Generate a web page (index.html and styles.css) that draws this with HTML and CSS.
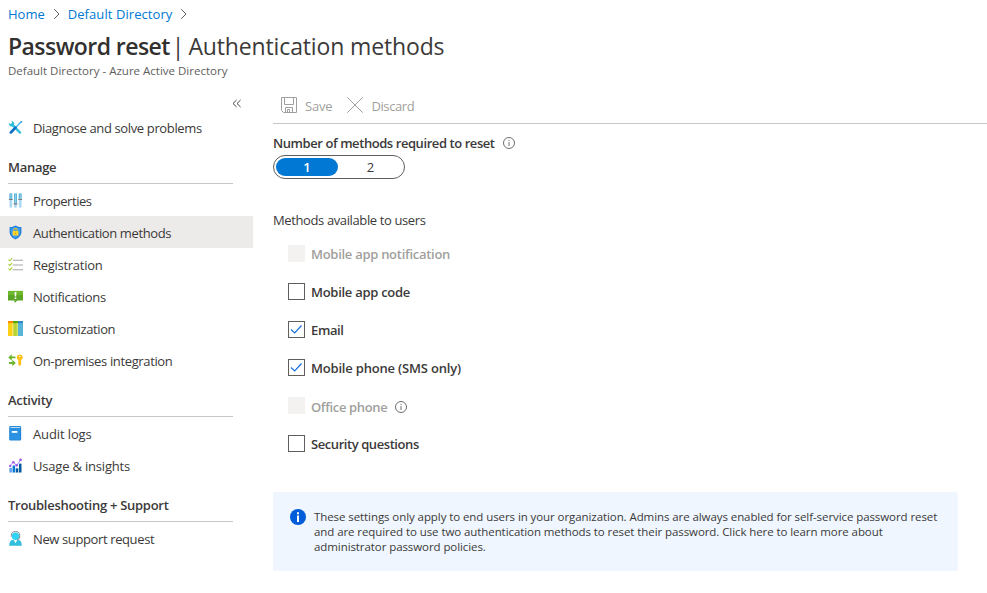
FILE: index.html
```html
<!DOCTYPE html>
<html lang="en">
<head>
<meta charset="utf-8">
<title>Password reset - Authentication methods</title>
<link rel="stylesheet" href="styles.css">
</head>
<body>
<header class="header">
  <nav class="crumbs">
    <a class="crumb">Home</a>
    <svg class="chev" viewBox="0 0 8 12"><path d="M1.2 1.2 6 6 1.2 10.8"/></svg>
    <a class="crumb wide">Default Directory</a>
    <svg class="chev" viewBox="0 0 8 12"><path d="M1.2 1.2 6 6 1.2 10.8"/></svg>
  </nav>
  <h1 class="title"><span class="title-main">Password reset</span><span class="title-bar">|</span><span class="title-sub">Authentication methods</span></h1>
  <p class="subtitle">Default Directory - Azure Active Directory</p>
</header>
<div class="body">
  <aside class="side">
    <div class="collapse"><svg viewBox="0 0 10 8"><path d="M4.6.5 1 4l3.6 3.5M8.6.5 5 4l3.6 3.5"/></svg></div>
    <a class="item">
      <svg class="ico" viewBox="0 0 16 16"><path d="M4.2 4.6 12.8 13.4" stroke="#32bedd" stroke-width="2.6" stroke-linecap="round"/><path d="M1 3.2A3 3 0 0 0 5.3 6.6L6.6 5.1A3 3 0 0 0 3.6 1.1L4.6 3 3.2 4.4Z" fill="#32bedd"/><path d="M14.2 1.6 8.2 8" stroke="#3cb4e7" stroke-width="1.3"/><path d="M13.1 2.6 14.6 1l.7.7-1.5 1.5z" fill="#0078d4"/><path d="M8 8.2 3 13.3" stroke="#0f6fc6" stroke-width="2.8" stroke-linecap="round"/></svg>
      <span class="tight-4">Diagnose and solve problems</span></a>
    <h2 class="group"><span class="tight-3">Manage</span></h2>
    <a class="item">
      <svg class="ico" viewBox="0 0 16 16"><path d="M1.5.5h3v15h-3zM6.5.5h3v15h-3zM11.5.5h3v15h-3z" fill="#b5def2"/><path d="M1.5.5h3V7h-3zM6.5.5h3V11h-3zM11.5.5h3V6h-3z" fill="#59b4d9"/><path d="M2.7.5h.8v15h-.8zM7.7.5h.8v15h-.8zM12.7.5h.8v15h-.8z" fill="#9bd2eb"/><path d="M1 6.3h4v1.2H1zM6 11h4v1.2H6zM11 6.3h4v1.2h-4z" fill="#7a7a7a"/></svg>
      <span class="tight-6">Properties</span></a>
    <a class="item selected">
      <svg class="ico" viewBox="0 0 16 16"><path d="M8 .5C10 2 12 2 14.3 2.3V7.5C14.3 11.5 11 13.8 8 15.5 5 13.8 1.7 11.5 1.7 7.5V2.3C4 2 6 2 8 .5Z" fill="#1a79d7"/><path d="M8 1.7c1.8 1.2 3.4 1.4 5.2 1.6v4.2c0 3.2-2.7 5.3-5.2 6.8-2.5-1.5-5.2-3.6-5.2-6.8V3.3C4.6 3.1 6.2 2.9 8 1.7Z" fill="#3b9cf0"/><path d="M6.3 7V5.5a1.7 1.7 0 0 1 3.4 0V7" fill="none" stroke="#f5c518" stroke-width="1.1"/><rect x="4.9" y="6.5" width="6.2" height="4.8" rx=".6" fill="#ffd42a"/><path d="M7.6 8.2h.8v1.400h-.8z" fill="#b8860b"/></svg>
      <span class="tight-5">Authentication methods</span></a>
    <a class="item">
      <svg class="ico" viewBox="0 0 16 16"><path d="M5 3.500H16M5 8.500H16M5 13.500H16" stroke="#a6a6a6" stroke-width="1.100"/><path d="M.5 2.700 2 4 4.500 1.300M.5 7.700 2 9 4.500 6.300M.5 12.500 2 13.800 4.500 11.100" fill="none" stroke="#a4cf30" stroke-width="1.100"/></svg>
      <span class="tight-3">Registration</span></a>
    <a class="item">
      <svg class="ico" viewBox="0 0 16 16"><path d="M0 2h16v10.300H10L7 15V12.300H0z" fill="#5ba526"/><path d="M0 2h16v4.500H0z" fill="#6db82d"/><path d="M7 3.200h2l-.3 4.800H7.300zM7.100 9h1.800v1.700H7.100z" fill="#fff"/></svg>
      <span class="tight-3">Notifications</span></a>
    <a class="item">
      <svg class="ico" viewBox="0 0 16 16"><path d="M0 0h5.500v16H0z" fill="#fcd116"/><path d="M5.500 0h5v16h-5z" fill="#b8d432"/><path d="M10.500 0H16v16h-5.500z" fill="#59b4d9"/><path d="M0 0h5.500v2.300H0z" fill="#ff8c00"/><path d="M5.500 0h5v2.300h-5z" fill="#57a300"/><path d="M10.500 0H16v2.300h-5.500z" fill="#3587c4"/><path d="M4.300 2.300h1.200V16H4.300z" fill="#ffe36b"/><path d="M9.300 2.300h1.200V16H9.300z" fill="#d3e572"/></svg>
      <span class="tight-5">Customization</span></a>
    <a class="item">
      <svg class="ico" viewBox="0 0 16 16"><path d="M.3 4.700 4 1.200v2.500h4v2H4v2.500zM8.300 10.700l-3.700-3.500v2.500H1v2h3.600v2.500z" fill="#6bb42c"/><path d="M12.500 1.500a3.200 3.200 0 0 1 1.500 6v4.700l-1.500 1.800-1.500-1.800V7.500a3.200 3.200 0 0 1 1.500-6z" fill="#fdbf12"/><circle cx="12.500" cy="3.800" r=".8" fill="#fff"/></svg>
      <span class="tight-4">On-premises integration</span></a>
    <h2 class="group"><span class="tight-3">Activity</span></h2>
    <a class="item">
      <svg class="ico" viewBox="0 0 16 16"><path d="M2.500 0H13a1 1 0 0 1 1 1V14.500a1 1 0 0 1-1 1H2.500a1.200 1.200 0 0 1-1.200-1.200V1.200A1.200 1.200 0 0 1 2.500 0z" fill="#1f83d6"/><path d="M2.500 1H13v1H2.500z" fill="#d6ebfa"/><path d="M2 2.300h10.800v12.500H2z" fill="#2b91e2"/><path d="M4 5.300h6v2H4z" fill="#fff"/></svg>
      <span class="tight-1">Audit logs</span></a>
    <a class="item">
      <svg class="ico" viewBox="0 0 16 16"><path d="M1.500 10.500h2.700v5H1.500z" fill="#5ea0ef"/><path d="M4.900 8h2.700v7.500H4.900z" fill="#0078d4"/><path d="M8.300 11h2.700v4.500H8.300z" fill="#005ba1"/><path d="M11.700 6h2.700v9.500h-2.700z" fill="#005ba1"/><path d="M2.300 8.200 5.500 4.500 9.300 7.800 13.300 2.200" fill="none" stroke="#a67af4" stroke-width="1"/><g fill="#a05cf0"><circle cx="2.300" cy="8.400" r="1.300"/><circle cx="5.700" cy="4.500" r="1.400"/><circle cx="9.300" cy="7.800" r="1.400"/><circle cx="13.400" cy="2" r="1.400"/></g></svg>
      <span class="tight-2">Usage &amp; insights</span></a>
    <h2 class="group"><span class="tight-3">Troubleshooting + Support</span></h2>
    <a class="item">
      <svg class="ico" viewBox="0 0 16 16"><path d="M1.300 15.800c0-4.300 1.500-6.300 4.300-6.300h4.800c2.800 0 4.300 2 4.300 6.300z" fill="#32bedd"/><path d="M6 9.500h4l-2 3.500z" fill="#eafaff"/><circle cx="8" cy="5.500" r="4" fill="#32d4f5"/><path d="M3.500 6V4.800a4.500 4.200 0 0 1 9 0V6.500q0 2.300-3 2.800" fill="none" stroke="#6f7479" stroke-width=".9"/></svg>
      <span class="tight-5">New support request</span></a>
  </aside>
  <main class="main">
    <div class="toolbar">
      <button class="tool save"><svg viewBox="0 0 16 16"><path d="M.5.5h15v15H2.500L.5 13.500zM3.500.5v7h9v-7M4.500 15.500v-5h7v5M6.500 15.500v-3h2v3"/></svg><span class="tight-2">Save</span></button>
      <button class="tool discard"><svg viewBox="0 0 16 16"><path d="M.3.3 15.700 15.700M15.700.3.3 15.700"/></svg><span class="tight-5">Discard</span></button>
    </div>
    <div class="label"><span class="tight-6">Number of methods required to reset</span>
      <svg class="info" viewBox="0 0 12 12"><circle cx="6" cy="6" r="5.500"/><path d="M6 5v4M6 3v1"/></svg></div>
    <div class="switch"><span class="opt on">1</span><span class="opt two">2</span></div>
    <p class="sub"><span class="tight-5">Methods available to users</span></p>
    <ul class="methods">
      <li class="method off"><i class="box"></i><span class="tight-3">Mobile app notification</span></li>
      <li class="method"><i class="box"></i><span class="tight-3">Mobile app code</span></li>
      <li class="method"><i class="box"><svg viewBox="0 0 15 15"><path d="M2 7.500 5.700 11 12.500 3.500"/></svg></i><span class="tight-5">Email</span></li>
      <li class="method"><i class="box"><svg viewBox="0 0 15 15"><path d="M2 7.500 5.700 11 12.500 3.500"/></svg></i><span class="tight-2">Mobile phone (SMS only)</span></li>
      <li class="method off low"><i class="box"></i><span class="tight-4">Office phone</span>
        <svg class="info" viewBox="0 0 12 12"><circle cx="6" cy="6" r="5.500"/><path d="M6 5v4M6 3v1"/></svg></li>
      <li class="method"><i class="box"></i><span class="tight-6">Security questions</span></li>
    </ul>
    <div class="notice">
      <svg viewBox="0 0 16 16"><circle cx="8" cy="8" r="8" fill="#015cda"/><path d="M7 6.500h2v6.500H7zM7 3.200h2v2H7z" fill="#fff"/></svg>
      <p>These settings only apply to end users in your organization. Admins are always enabled for self-service password reset and are required to use two authentication methods to reset their password. Click here to learn more about administrator password policies.</p>
    </div>
  </main>
</div>
</body>
</html>
```
FILE: styles.css
```css
* { box-sizing: border-box; }
body { margin: 0; width: 987px; height: 593px; overflow: hidden; background: #fff; color: #3b3a39; font: 13px/20px "Open Sans", "Noto Sans", sans-serif; }

/* Label tracking */
.tight-1 { letter-spacing: -.12px; }
.tight-2 { letter-spacing: -.19px; }
.tight-3 { letter-spacing: -.28px; }
.tight-4 { letter-spacing: -.36px; }
.tight-5 { letter-spacing: -.38px; }
.tight-6 { letter-spacing: -.43px; }

.header { height: 87px; padding: 4px 8px 0; }
.crumbs { display: flex; align-items: center; height: 20px; color: #0078d4; }
.wide { letter-spacing: .07px; }
.chev { width: 8px; height: 12px; margin: 0 7px 0 8px; fill: none; stroke: #605e5c; stroke-width: 1; }
.title { margin: 6px 0 0; height: 33px; font-size: 23px; line-height: 32px; font-weight: 400; white-space: nowrap; }
.title-main { color: #323130; font-weight: 600; letter-spacing: -.56px; }
.title-bar { margin: 0 4px 0 2px; }
.title-sub { letter-spacing: -.14px; }
.subtitle { margin: 0; font-size: 11.5px; line-height: 16px; color: #605e5c; }

.body { display: flex; align-items: flex-start; }
.side { width: 253px; flex: none; }
.collapse { height: 24px; padding: 12px 11px 0 0; display: flex; justify-content: flex-end; }
.collapse svg { width: 10px; height: 9px; fill: none; stroke: #323130; stroke-width: .9; }
.item { display: flex; align-items: center; height: 32px; padding: 1px 0 0 8px; white-space: nowrap; }
.selected { background: #edebe9; }
.ico { width: 15px; height: 15px; margin: -1px 10px 0 0; fill: none; }
.group { height: 41px; margin: 0 20px 0 8px; padding-top: 14px; border-bottom: 1px solid #c8c6c4; font-size: 13px; line-height: 20px; font-weight: 600; white-space: nowrap; }

.main { flex: 1; margin-left: 20px; }
.toolbar { display: flex; height: 37px; padding-left: 8px; border-bottom: 1px solid #c8c6c4; }
.tool { display: flex; align-items: center; height: 37px; padding: 0; border: 0; background: none; color: #a19f9d; font: inherit; }
.tool svg { width: 16px; height: 16px; margin: -1px 8px 0 0; fill: none; stroke: #a19f9d; stroke-width: 1; }
.discard { margin-left: 15px; }
.label { display: flex; align-items: center; height: 20px; margin-top: 9px; font-weight: 600; }
.info { width: 12px; height: 12px; margin-left: 8px; fill: none; stroke: #605e5c; stroke-width: .9; }
.switch { display: flex; width: 132px; height: 24px; margin-top: 2px; padding: 2px; border: 1px solid #605e5c; border-radius: 12px; }
.opt { flex: none; width: 62px; height: 18px; border-radius: 9px; text-align: center; line-height: 18px; }
.two { width: 65px; }
.on { background: #0078d4; color: #fff; font-weight: 600; }
.sub { margin: 31px 0 0; }
.methods { list-style: none; margin: 5px 0 0; padding: 0 0 0 15px; }
.method { display: flex; align-items: center; height: 38px; font-weight: 600; }
.low { padding-top: 2px; }
.box { display: block; width: 17px; height: 17px; margin: -2px 6px 0 0; border: 1px solid #605e5c; }
.low .box { margin-top: -4px; }
.box svg { display: block; width: 15px; height: 15px; fill: none; stroke: #1a6fe0; stroke-width: 1.2; }
.off { color: #a19f9d; }
.off .box { border: 0; background: #f3f2f1; }
.notice { display: flex; width: 685px; height: 79px; margin-top: 29px; padding: 17px 16px 17px 17px; border-radius: 2px; background: #eff6ff; }
.notice svg { width: 16px; height: 16px; margin-right: 8px; flex: none; }
.notice p { margin: 0; font-size: 11.5px; line-height: 15px; letter-spacing: -.08px; }
```
